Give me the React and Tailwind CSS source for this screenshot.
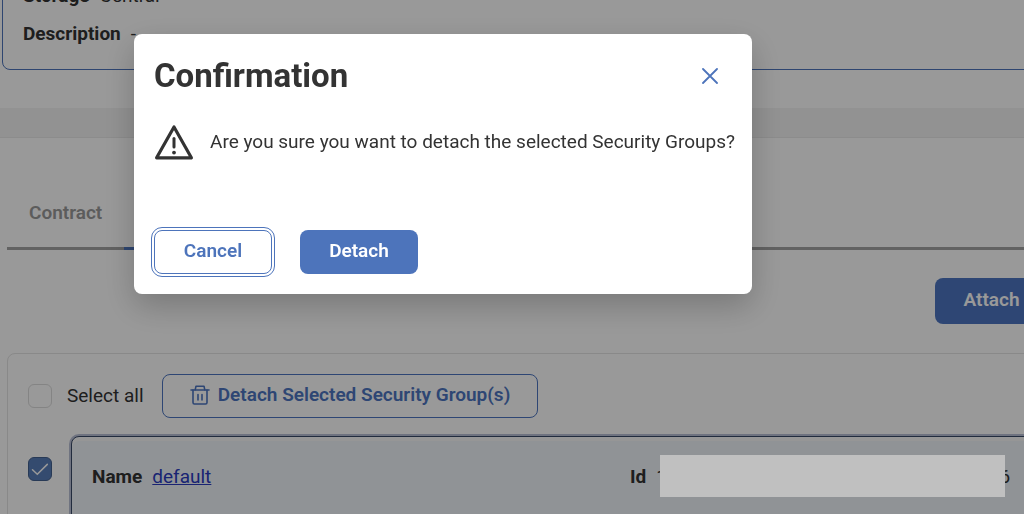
import React, { useState } from 'react';

const WarningIcon = () => (
  <svg className="h-9 w-10 shrink-0" viewBox="0 0 40 36" fill="none" stroke="#333333" aria-hidden="true">
    <path d="M20 3 L37.4 33.8 H2.6 Z" strokeWidth="3.2" strokeLinejoin="round" />
    <path d="M20 14.5 V23" strokeWidth="3" strokeLinecap="round" />
    <circle cx="20" cy="28.6" r="1.9" fill="#333333" stroke="none" />
  </svg>
);

const CloseIcon = () => (
  <svg className="h-4 w-4" viewBox="0 0 16 16" fill="none" stroke="#4d74bb" strokeWidth="1.8" strokeLinecap="round" aria-hidden="true">
    <path d="M1 1 L15 15 M15 1 L1 15" />
  </svg>
);

const TrashIcon = () => (
  <svg className="h-5 w-5" viewBox="0 0 20 20" fill="none" stroke="currentColor" strokeWidth="1.6" strokeLinecap="round" strokeLinejoin="round" aria-hidden="true">
    <path d="M1 5 H19" />
    <path d="M5.2 4.8 L6 1.2 H14 L14.8 4.8" />
    <path d="M3 5 V17.6 Q3 19 4.4 19 H15.6 Q17 19 17 17.6 V5" />
    <path d="M8 9.5 V15 M12 9.5 V15" />
  </svg>
);

const Checkbox = ({ id, label, checked, onChange }) => (
  <span className="grid h-6 w-6 shrink-0">
    <input
      id={id}
      type="checkbox"
      aria-label={label}
      checked={checked}
      onChange={onChange}
      className="col-start-1 row-start-1 h-6 w-6 appearance-none rounded-md border border-[#dcdcdc] bg-white checked:border-[#44618f] checked:bg-[#587eb9]"
    />
    {checked && (
      <svg className="pointer-events-none col-start-1 row-start-1 h-6 w-6" viewBox="0 0 24 24" fill="none" stroke="white" strokeWidth="1.5" strokeLinecap="round" aria-hidden="true">
        <path d="M4.5 12.8 L9.3 17.3 L19.3 7.4" />
      </svg>
    )}
  </span>
);

const Field = ({ label, children }) => (
  <div className="flex gap-2.5">
    <dt className="font-bold">{label}</dt>
    <dd>{children}</dd>
  </div>
);

const ConfirmDialog = ({ onClose }) => (
  <div className="fixed inset-0 z-10 bg-black/40 pt-[34px] pl-[134px]">
    <div
      role="dialog"
      aria-modal="true"
      aria-labelledby="confirm-title"
      className="max-w-[618px] rounded-lg bg-white px-5 pt-[22px] pb-5 shadow-[0_12px_32px_rgba(0,0,0,0.22)]"
    >
      <div className="flex items-center justify-between pr-3">
        <h2 id="confirm-title" className="text-[33px] leading-10 font-bold">Confirmation</h2>
        <button type="button" aria-label="Close" onClick={onClose} className="p-0.5">
          <CloseIcon />
        </button>
      </div>
      <div className="mt-7 flex items-center gap-4">
        <WarningIcon />
        <p className="whitespace-nowrap">Are you sure you want to detach the selected Security Groups?</p>
      </div>
      <div className="mt-[70px] flex gap-7">
        <button
          type="button"
          onClick={onClose}
          className="h-11 w-[118px] rounded-lg border border-[#4d74bb] pb-0.5 font-semibold text-[#4d74bb] outline outline-offset-2 outline-[#4d74bb]"
        >
          Cancel
        </button>
        <button type="button" className="h-11 w-[118px] rounded-lg bg-[#4d74bb] pb-0.5 font-semibold text-white">
          Detach
        </button>
      </div>
    </div>
  </div>
);

const App = () => {
  const [open, setOpen] = useState(true);
  const [allSelected, setAllSelected] = useState(false);
  const [selected, setSelected] = useState(true);

  return (
    <div className="h-screen overflow-hidden bg-white font-[Roboto,'Liberation_Sans',sans-serif] text-[19px] leading-6 text-[#333333]">
      <div className="w-[calc(100%+24px)]">
        {/* Details */}
        <section className="pb-[38px] pl-[2px]">
          <dl className="-mt-[18px] space-y-3.5 rounded-lg border border-[#4d74bb] pt-[1px] pb-[23px] pl-5">
            <Field label="Storage">Central</Field>
            <Field label="Description">-</Field>
          </dl>
        </section>
        <div className="h-[30px] border-b border-[#e9e9e9] bg-[#f3f3f3]" />

        {/* Security groups */}
        <section className="pl-[7px]">
          <nav className="flex border-b-3 border-[#a3a3a3] pt-[47px] font-semibold">
            <a href="#contract" className="px-[22px] pt-4 pb-[22px] text-[#999999]">Contract</a>
            <a href="#security-groups" className="-mb-[3px] border-b-3 border-[#4d74bb] px-[22px] pt-4 pb-[22px]">Security Groups</a>
          </nav>
          <div className="flex justify-end pt-7">
            <button type="button" className="h-[46px] w-[113px] rounded-lg bg-[#4d76c1] pb-0.5 font-semibold text-white">Attach</button>
          </div>

          <div className="mt-[29px] rounded-lg border border-[#e4e4e4] pt-5 pl-5">
            <div className="flex items-center">
              <Checkbox id="select-all" checked={allSelected} onChange={() => setAllSelected(!allSelected)} />
              <label htmlFor="select-all" className="w-[110px] pl-[15px] whitespace-nowrap">Select all</label>
              <button type="button" onClick={() => setOpen(true)} className="flex h-11 w-[376px] items-center justify-center gap-2 rounded-lg border border-[#4d76c1] pb-0.5 font-semibold whitespace-nowrap text-[#4d76c1]">
                <TrashIcon />
                Detach Selected Security Group(s)
              </button>
            </div>
            <div className="mt-[18px] flex gap-[19px]">
              <div className="pt-[21px]">
                <Checkbox label="Select default" checked={selected} onChange={() => setSelected(!selected)} />
              </div>
              <dl className="grid flex-1 grid-cols-[538px_1fr] rounded-t-lg border border-[#3a4a68] bg-[#f0f5fb] pt-7 pb-12 pl-5 shadow-[0_0_0_2px_#b9c0d6,inset_0_4px_0_#fafafa]">
                <Field label="Name">
                  <a href="#default" className="text-[#2a3bc0] underline">default</a>
                </Field>
                <Field label="Id">
                  <span className="relative flex w-[354px] justify-between">
                    <span>1</span>
                    <span>6</span>
                    <span className="absolute -top-2.5 right-[5px] left-1 z-20 h-[42px] bg-[#c0c0c0]" />
                  </span>
                </Field>
              </dl>
            </div>
          </div>
        </section>
      </div>

      {open && <ConfirmDialog onClose={() => setOpen(false)} />}
    </div>
  );
};

export default App;
